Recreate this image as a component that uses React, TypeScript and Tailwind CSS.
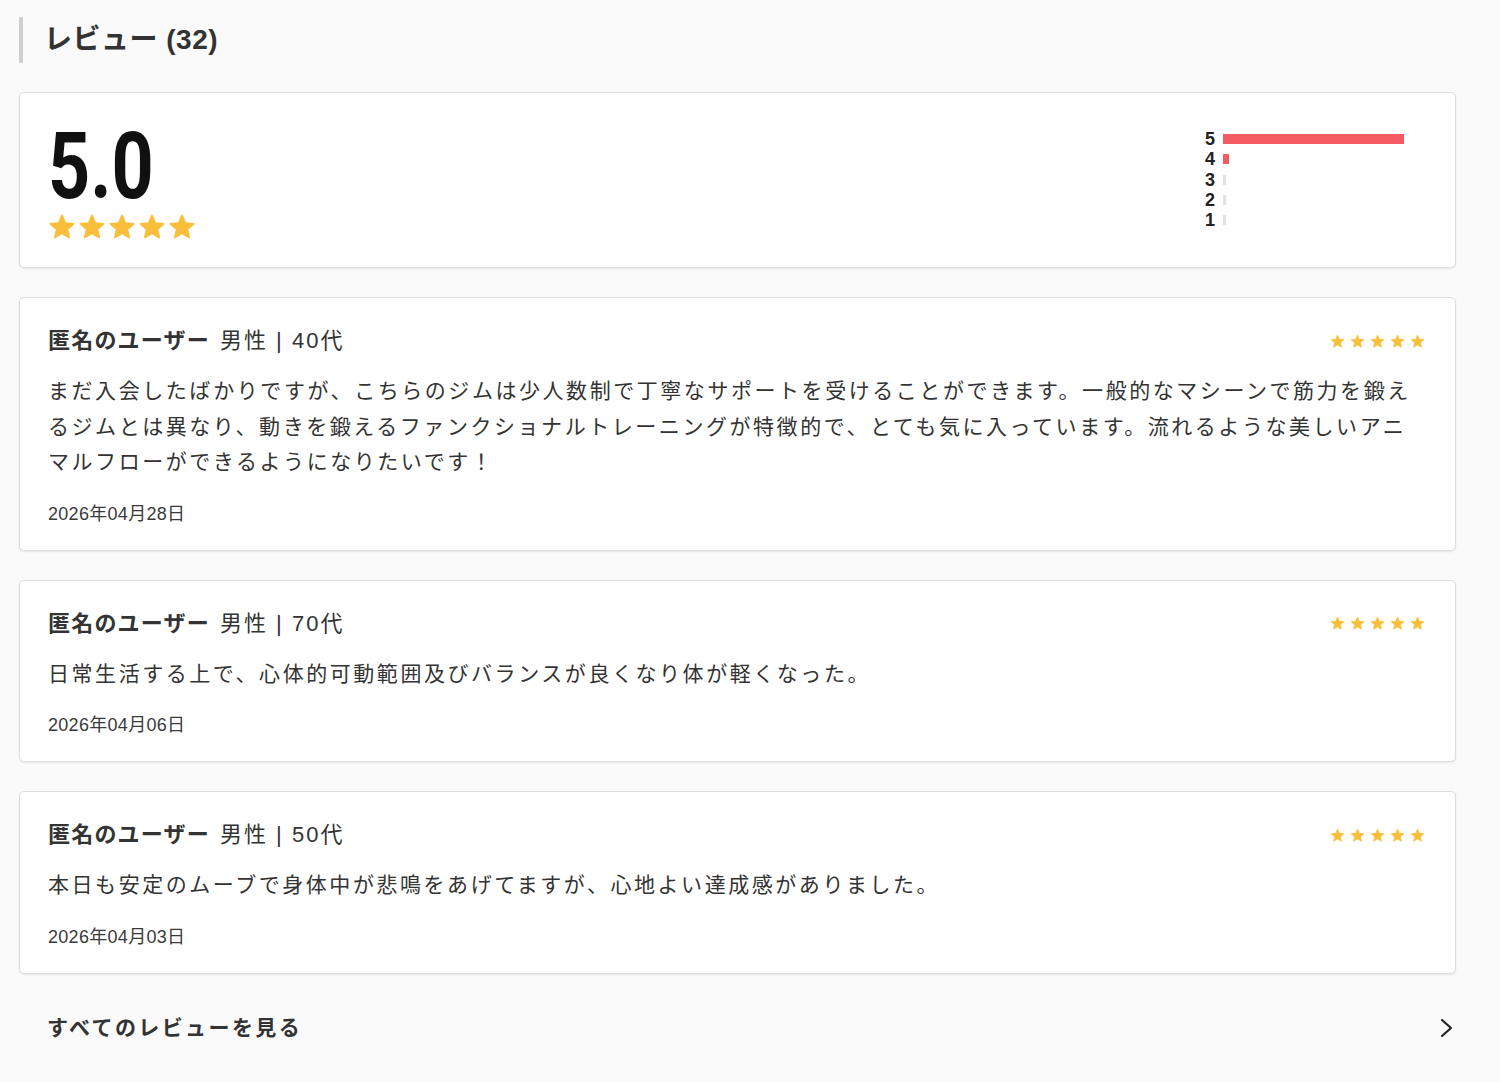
import React from 'react';

const reviews = [
  {
    gender: '男性',
    age: '40代',
    body: 'まだ入会したばかりですが、こちらのジムは少人数制で丁寧なサポートを受けることができます。一般的なマシーンで筋力を鍛えるジムとは異なり、動きを鍛えるファンクショナルトレーニングが特徴的で、とても気に入っています。流れるような美しいアニマルフローができるようになりたいです！',
    date: '2026年04月28日',
  },
  {
    gender: '男性',
    age: '70代',
    body: '日常生活する上で、心体的可動範囲及びバランスが良くなり体が軽くなった。',
    date: '2026年04月06日',
  },
  {
    gender: '男性',
    age: '50代',
    body: '本日も安定のムーブで身体中が悲鳴をあげてますが、心地よい達成感がありました。',
    date: '2026年04月03日',
  },
];

const distribution = [
  { label: '5', width: 181, active: true },
  { label: '4', width: 6, active: true },
  { label: '3', width: 3, active: false },
  { label: '2', width: 3, active: false },
  { label: '1', width: 3, active: false },
];

const Star = ({ className }: { className: string }) => (
  <svg viewBox="0 0 24 24" className={className} fill="#f9bf3b">
    <path d="M12 17.27L18.18 21l-1.64-7.03L22 9.24l-7.19-.61L12 2 9.19 8.63 2 9.24l5.46 4.73L5.82 21z" strokeLinejoin="round" stroke="#f9bf3b" strokeWidth="1.5" />
  </svg>
);

const Stars = ({ size, gap }: { size: string; gap: string }) => (
  <div className={`flex ${gap}`}>
    {[0, 1, 2, 3, 4].map((i) => (
      <Star key={i} className={size} />
    ))}
  </div>
);

const App = () => {
  return (
    <div
      className="min-h-[1082px] bg-[#fafafa] text-[#333] px-[19px]"
      style={{ fontFamily: '"Liberation Sans", "Noto Sans CJK JP", sans-serif' }}
    >
      <div className="w-[1437px]">
        <div className="pt-[17px] pb-[29px]">
          <div className="flex items-center border-l-4 border-[#cfcfcf] h-[46px] pl-[21px]">
            <h2 className="text-[28px] font-bold leading-none tracking-[0.5px]">レビュー (32)</h2>
          </div>
        </div>

        <div className="flex flex-col gap-[29px]">
          <section className="bg-white border border-[#dedede] rounded-[5px] shadow-[0_1px_2px_rgba(0,0,0,0.08)] h-[176px] flex justify-between pl-[28px] pr-[48px] pt-[28px]">
            <div>
              <div
                className="text-[92px] font-bold leading-none text-[#111] scale-x-[0.8] origin-left h-[88px]"
                style={{ fontFamily: 'Roboto, "Liberation Sans", sans-serif' }}
              >
                5.0
              </div>
              <div className="mt-[4px]">
                <Stars size="w-[28px] h-[28px]" gap="gap-[2px]" />
              </div>
            </div>
            <div className="pt-[8px] w-[210px]">
              {distribution.map((d) => (
                <div key={d.label} className="flex items-center h-[20.3px]">
                  <span className="w-[20px] text-right pr-[2px] text-[18px] font-bold leading-[18px] text-[#222]">
                    {d.label}
                  </span>
                  <div className="ml-[6px] h-[10px] flex">
                    <div
                      className={d.active ? 'h-full bg-[#f45b61]' : 'h-full bg-[#e2e2e2]'}
                      style={{ width: d.width }}
                    />
                  </div>
                </div>
              ))}
            </div>
          </section>

          {reviews.map((r, idx) => (
            <article
              key={idx}
              className="bg-white border border-[#dedede] rounded-[5px] shadow-[0_1px_2px_rgba(0,0,0,0.08)] pt-[29px] pb-[24px] pl-[28px] pr-[30px]"
            >
              <div className="flex items-center justify-between h-[28px]">
                <div className="text-[22px] leading-none">
                  <span className="font-bold tracking-[1.2px]">匿名のユーザー</span>
                  <span className="ml-[10px] tracking-[2px]">{r.gender} | {r.age}</span>
                </div>
                <Stars size="w-[15px] h-[15px]" gap="gap-[5px]" />
              </div>
              <p className="mt-[18px] text-[21px] leading-[35.5px] tracking-[2.55px] pr-[8px]">{r.body}</p>
              <div className="mt-[22px] text-[18px] leading-[24px] tracking-[0.3px] text-[#3a3a3a]">{r.date}</div>
            </article>
          ))}
        </div>

        <a href="#" className="flex items-center justify-between h-[108px] pl-[28px] pr-[2px]">
          <span className="text-[21px] font-bold tracking-[2.4px] text-[#333]">すべてのレビューを見る</span>
          <svg width="14" height="20" viewBox="0 0 14 20" fill="none">
            <polyline points="2,2 11,10 2,18" stroke="#222" strokeWidth="2.2" strokeLinecap="round" strokeLinejoin="round" />
          </svg>
        </a>
      </div>
    </div>
  );
};

export default App;
